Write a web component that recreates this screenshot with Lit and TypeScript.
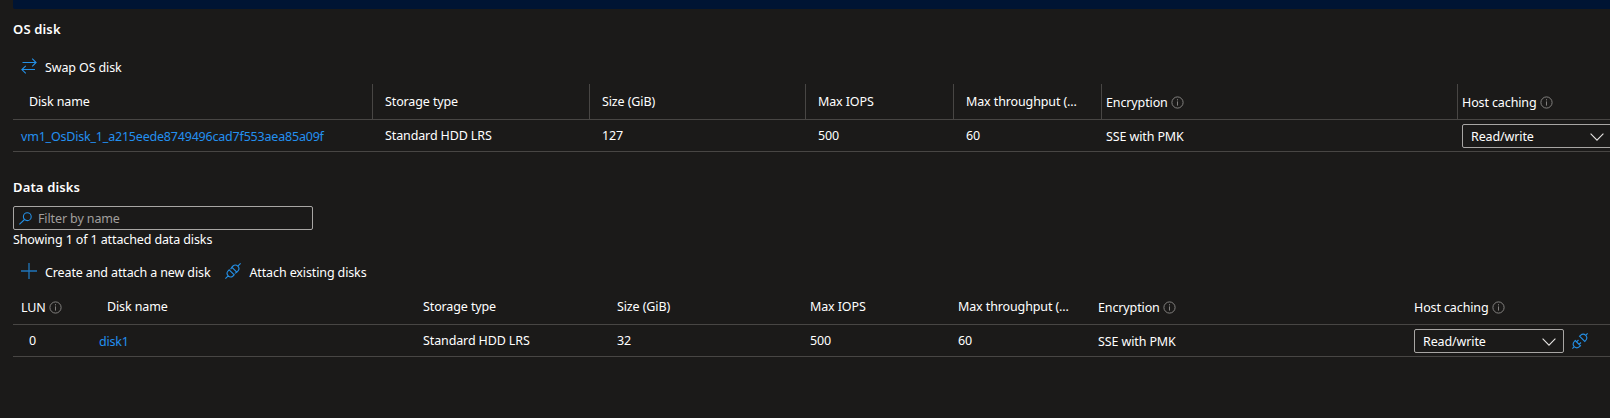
import { LitElement, html, css, svg, nothing } from "lit";
import { customElement, property } from "lit/decorators.js";
import { classMap } from "lit/directives/class-map.js";

type IconName = "swap" | "plus" | "attach" | "detach" | "search" | "info" | "chevron";

const GLYPHS: Record<IconName, { w: number; h: number; body: unknown }> = {
  swap: {
    w: 16,
    h: 16,
    body: svg`<path d="M1.5 4.5H15M11.2 .6L15.1 4.5L11.2 8.4M14 11.5H1M4.8 7.9L.9 11.6L4.8 15.4" />`,
  },
  plus: { w: 16, h: 16, body: svg`<path d="M8 0V16M0 8H16" />` },
  attach: {
    w: 16,
    h: 16,
    body: svg`<path d="M.4 15.6L3.2 12.8M12.8 3.2L15.6 .4M4.2 6.8L9.2 11.8L8 13C6.6 14.2 4.6 14.2 3.2 12.8C1.8 11.4 1.8 9.4 3 8ZM6.8 4.2L11.8 9.2L13 8C14.2 6.6 14.2 4.6 12.8 3.2C11.4 1.8 9.4 1.8 8 3ZM6.8 4.2L5.6 6.2M11.8 9.2L9.8 10.4" />`,
  },
  detach: {
    w: 16,
    h: 16,
    body: svg`<path d="M.4 15.6L2.3 13.7M13.7 2.3L15.6 .4M3.2 7.5L8.5 12.8L7.5 13.7C6 15 3.8 15.1 2.3 13.7C.9 12.2 1 10 2.3 8.5ZM7.5 3.2L12.8 8.5L13.7 7.5C15 6 15.1 3.8 13.7 2.3C12.2 .9 10 1 8.5 2.3ZM4.6 8.9L6.5 7M7.1 11.4L9 9.5" />`,
  },
  search: {
    w: 13,
    h: 13,
    body: svg`<circle cx="8.3" cy="4.7" r="3.9" /><path d="M5.5 7.5L.4 12.4" />`,
  },
  info: {
    w: 13,
    h: 13,
    body: svg`<circle cx="6.5" cy="6.5" r="5.6" /><path d="M6.5 5.4V9.6M6.5 3.2V4.4" />`,
  },
  chevron: { w: 14, h: 8, body: svg`<path d="M.6 .7L7 7.1L13.4 .7" />` },
};

@customElement("ui-icon")
class UiIcon extends LitElement {
  @property() name: IconName = "info";

  static styles = css`
    :host {
      display: block;
      flex: none;
      color: #2490e6;
    }
    svg {
      display: block;
      fill: none;
      stroke: currentColor;
      stroke-width: 1.1;
    }
    .info {
      color: #82807e;
      stroke-width: 1;
    }
    .chevron {
      color: #e6e4e2;
    }
    .plus {
      color: #2176bb;
      stroke-width: 1.3;
    }
  `;

  render() {
    const g = GLYPHS[this.name];
    return html`<svg class=${this.name} width=${g.w} height=${g.h} viewBox="0 0 ${g.w} ${g.h}">${g.body}</svg>`;
  }
}

@customElement("ui-select")
class UiSelect extends LitElement {
  @property() value = "";

  static styles = css`
    :host {
      box-sizing: border-box;
      flex: none;
      width: 150px;
      height: 24px;
      display: flex;
      justify-content: space-between;
      border: 1px solid #a8a6a4;
      border-radius: 2px;
      padding: 1px 7px 0 8px;
      line-height: 22px;
    }
    ui-icon {
      margin-top: 7px;
    }
  `;

  render() {
    return html`<span>${this.value}</span><ui-icon name="chevron"></ui-icon>`;
  }
}

interface Column {
  title: string;
  kind?: "name" | "low" | "lun";
  info?: boolean;
}

interface Disk {
  lun?: string;
  name: string;
  storage: string;
  size: string;
  iops: string;
  throughput: string;
  encryption: string;
  caching: string;
}

const COLUMNS: Column[] = [
  { title: "Disk name", kind: "name" },
  { title: "Storage type" },
  { title: "Size (GiB)" },
  { title: "Max IOPS" },
  { title: "Max throughput (..." },
  { title: "Encryption", kind: "low", info: true },
  { title: "Host caching", kind: "low", info: true },
];

@customElement("disk-grid")
class DiskGrid extends LitElement {
  @property({ attribute: false }) disk!: Disk;
  @property({ type: Boolean, reflect: true }) data = false;

  static styles = css`
    :host {
      display: block;
      overflow: hidden;
    }
    .row {
      display: grid;
      grid-template-columns: 360px 217px 216px 148px 148px 356px 154px;
      box-sizing: border-box;
      border-bottom: 1px solid #484644;
    }
    :host([data]) .row {
      grid-template-columns: 78px 320px 194px 193px 148px 148px 316px 200px;
    }
    .head {
      height: 36px;
    }
    .body {
      height: 32px;
    }
    .cell {
      box-sizing: border-box;
      display: flex;
      align-items: flex-start;
      white-space: nowrap;
      padding: 7px 0 0 12px;
    }
    .head .cell {
      border-right: 1px solid #484644;
    }
    .head .cell:last-child,
    :host([data]) .head .cell {
      border-right: 0;
    }
    .body .cell {
      padding-top: 5px;
    }
    .cell.name,
    .body .cell.lun {
      padding-left: 16px;
    }
    .head .cell.lun {
      padding: 8px 0 0 8px;
    }
    .cell.low {
      padding: 8px 0 0 4px;
    }
    .body .cell.low {
      padding-top: 6px;
    }
    .body .cell.link {
      padding: 6px 0 0 8px;
      color: #2390f0;
      letter-spacing: -0.2px;
    }
    .body .cell.control {
      padding: 4px 0 0 4px;
      gap: 8px;
    }
    .head ui-icon {
      margin: 4px 0 0 3px;
    }
    .control > ui-icon {
      margin-top: 4px;
    }
  `;

  render() {
    const d = this.disk;
    const cols: Column[] = this.data ? [{ title: "LUN", kind: "lun", info: true }, ...COLUMNS] : COLUMNS;
    return html`
      <div class="row head">
        ${cols.map(
          (c) => html`<div class=${classMap({ cell: true, [c.kind ?? "plain"]: true })}>
            <span>${c.title}</span>${c.info ? html`<ui-icon name="info"></ui-icon>` : nothing}
          </div>`
        )}
      </div>
      <div class="row body">
        ${this.data ? html`<div class="cell lun">${d.lun}</div>` : nothing}
        <div class="cell link">${d.name}</div>
        <div class="cell">${d.storage}</div>
        <div class="cell">${d.size}</div>
        <div class="cell">${d.iops}</div>
        <div class="cell">${d.throughput}</div>
        <div class="cell low">${d.encryption}</div>
        <div class="cell control">
          <ui-select .value=${d.caching}></ui-select>
          ${this.data ? html`<ui-icon name="detach"></ui-icon>` : nothing}
        </div>
      </div>
    `;
  }
}

@customElement("app-root")
class AppRoot extends LitElement {
  static styles = css`
    :host {
      display: block;
      box-sizing: border-box;
      height: 418px;
      overflow: hidden;
      padding-left: 13px;
      background: #1b1a19;
      color: #fff;
      font: 12.5px/22px "Noto Sans", "Open Sans", sans-serif;
      letter-spacing: -0.12px;
    }
    .banner {
      height: 9px;
      background: #001433;
      border-bottom-left-radius: 2px;
    }
    h3 {
      margin: 10px 0 0;
      font-size: 13px;
      font-weight: 600;
      line-height: 20px;
      letter-spacing: 0.15px;
    }
    .toolbar {
      display: flex;
      gap: 15px;
      padding-left: 8px;
      height: 27px;
    }
    .swap {
      margin-top: 18px;
    }
    .action {
      display: flex;
      gap: 8px;
    }
    .action ui-icon {
      margin-top: 1px;
    }
    .data-title {
      margin-top: 25px;
    }
    .filter {
      box-sizing: border-box;
      display: flex;
      gap: 6px;
      width: 300px;
      height: 24px;
      margin-top: 9px;
      padding: 1px 5px 0;
      border: 1px solid #a8a6a4;
      border-radius: 2px;
      color: #a19f9d;
    }
    .filter ui-icon {
      margin-top: 4px;
    }
    .count {
      line-height: 20px;
      margin-bottom: 12px;
    }
  `;

  private osDisk: Disk = {
    name: "vm1_OsDisk_1_a215eede8749496cad7f553aea85a09f",
    storage: "Standard HDD LRS",
    size: "127",
    iops: "500",
    throughput: "60",
    encryption: "SSE with PMK",
    caching: "Read/write",
  };

  private dataDisk: Disk = { ...this.osDisk, lun: "0", name: "disk1", size: "32" };

  render() {
    return html`
      <div class="banner"></div>
      <h3>OS disk</h3>
      <div class="toolbar swap">
        <div class="action"><ui-icon name="swap"></ui-icon><span>Swap OS disk</span></div>
      </div>
      <disk-grid .disk=${this.osDisk}></disk-grid>
      <h3 class="data-title">Data disks</h3>
      <div class="filter"><ui-icon name="search"></ui-icon><span>Filter by name</span></div>
      <div class="count">Showing 1 of 1 attached data disks</div>
      <div class="toolbar">
        <div class="action"><ui-icon name="plus"></ui-icon><span>Create and attach a new disk</span></div>
        <div class="action"><ui-icon name="attach"></ui-icon><span>Attach existing disks</span></div>
      </div>
      <disk-grid data .disk=${this.dataDisk}></disk-grid>
    `;
  }
}
